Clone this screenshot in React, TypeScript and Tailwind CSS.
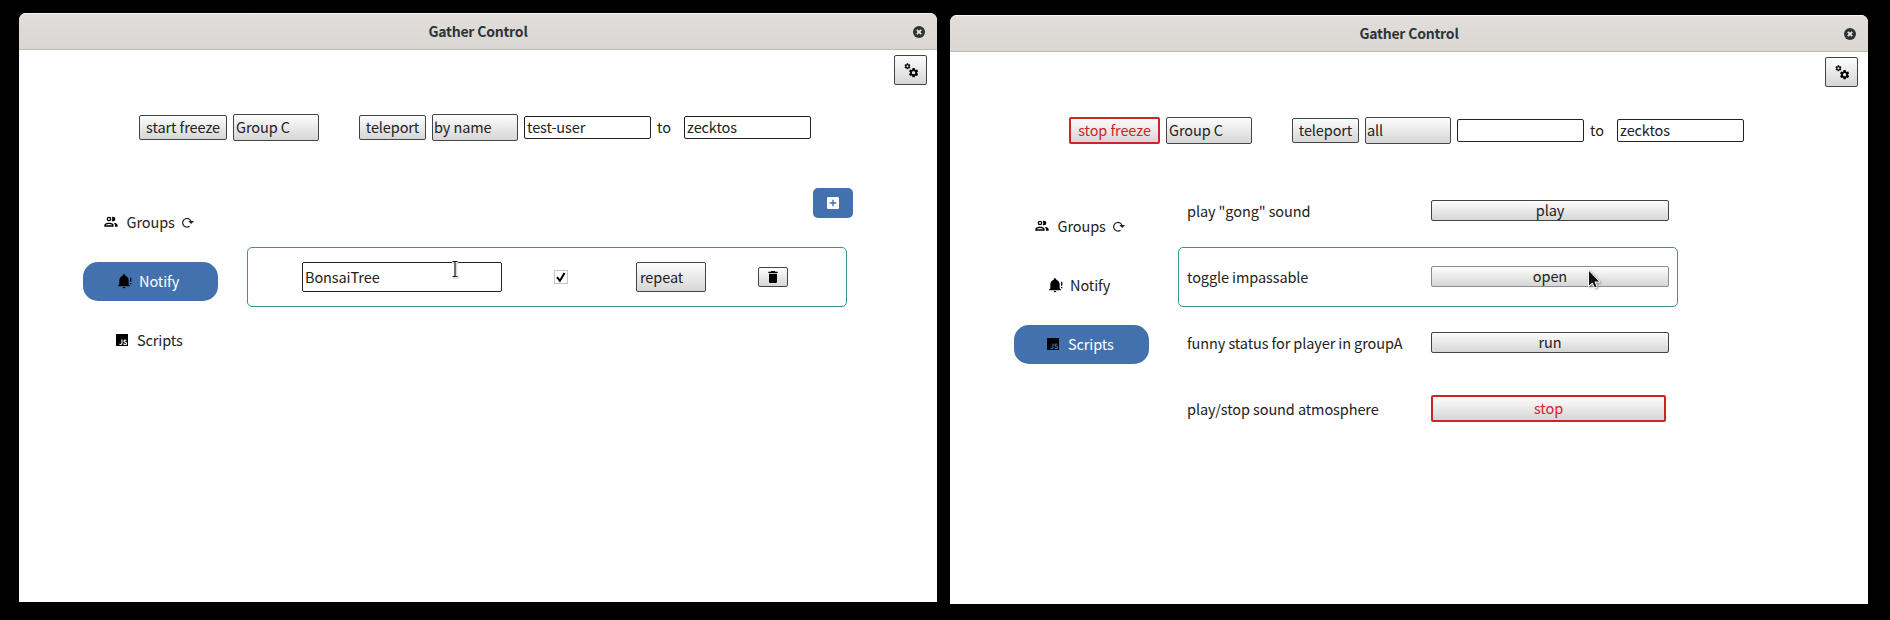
import type { ReactNode } from 'react';

const ICONS = {
  cogs: 'M15.9,18.45C17.25,18.45 18.35,17.35 18.35,16C18.35,14.65 17.25,13.55 15.9,13.55C14.54,13.55 13.45,14.65 13.45,16C13.45,17.35 14.54,18.45 15.9,18.45M21.1,16.68L22.58,17.84C22.71,17.95 22.75,18.13 22.66,18.29L21.26,20.71C21.17,20.86 21,20.92 20.83,20.86L19.09,20.16C18.73,20.44 18.33,20.67 17.91,20.85L17.64,22.7C17.62,22.87 17.47,23 17.3,23H14.5C14.32,23 14.18,22.87 14.15,22.7L13.89,20.85C13.46,20.67 13.07,20.44 12.71,20.16L10.96,20.86C10.81,20.92 10.62,20.86 10.54,20.71L9.14,18.29C9.05,18.13 9.09,17.95 9.22,17.84L10.7,16.68L10.65,16L10.7,15.31L9.22,14.16C9.09,14.05 9.05,13.86 9.14,13.71L10.54,11.29C10.62,11.13 10.81,11.07 10.96,11.13L12.71,11.84C13.07,11.56 13.46,11.32 13.89,11.15L14.15,9.29C14.18,9.13 14.32,9 14.5,9H17.3C17.47,9 17.62,9.13 17.64,9.29L17.91,11.15C18.33,11.32 18.73,11.56 19.09,11.84L20.83,11.13C21,11.07 21.17,11.13 21.26,11.29L22.66,13.71C22.75,13.86 22.71,14.05 22.58,14.16L21.1,15.31L21.15,16L21.1,16.68M6.69,8.07C7.56,8.07 8.26,7.37 8.26,6.5C8.26,5.63 7.56,4.92 6.69,4.92A1.58,1.58 0 0,0 5.11,6.5C5.11,7.37 5.82,8.07 6.69,8.07M10.03,6.94L11,7.68C11.07,7.74 11.09,7.87 11.03,7.97L10.13,9.53C10.08,9.63 9.96,9.67 9.86,9.63L8.74,9.18L8,9.62L7.81,10.81C7.79,10.92 7.7,11 7.59,11H5.79C5.67,11 5.58,10.92 5.56,10.81L5.4,9.62L4.64,9.18L3.5,9.63C3.41,9.67 3.3,9.63 3.24,9.53L2.34,7.97C2.28,7.87 2.31,7.74 2.39,7.68L3.34,6.94L3.31,6.5L3.34,6.06L2.39,5.32C2.31,5.26 2.28,5.13 2.34,5.03L3.24,3.47C3.3,3.37 3.41,3.33 3.5,3.38L4.63,3.82L5.4,3.38L5.56,2.19C5.58,2.08 5.67,2 5.79,2H7.59C7.7,2 7.79,2.08 7.81,2.19L8,3.38L8.74,3.82L9.86,3.38C9.96,3.33 10.08,3.37 10.13,3.47L11.03,5.03C11.09,5.13 11.07,5.26 11,5.32L10.03,6.06L10.06,6.5L10.03,6.94Z',
  groups:
    'M13.07 10.41A5 5 0 0 0 13.07 4.59A3.39 3.39 0 0 1 15 4A3.5 3.5 0 0 1 15 11A3.39 3.39 0 0 1 13.07 10.41M5.5 7.5A3.5 3.5 0 1 1 9 11A3.5 3.5 0 0 1 5.5 7.5M7.5 7.5A1.5 1.5 0 1 0 9 6A1.5 1.5 0 0 0 7.5 7.5M16 17V19H2V17S2 13 9 13 16 17 16 17M14 17C13.86 16.22 12.67 15 9 15S4.07 16.31 4 17M15.95 13A5.32 5.32 0 0 1 18 17V19H22V17S22 13.37 15.94 13Z',
  bell: 'M23 7V13H21V7M21 15H23V17H21M12 2A2 2 0 0 0 10 4A2 2 0 0 0 10 4.29C7.12 5.14 5 7.82 5 11V17L3 19V20H21V19L19 17V11C19 7.82 16.88 5.14 14 4.29A2 2 0 0 0 14 4A2 2 0 0 0 12 2M10 21A2 2 0 0 0 12 23A2 2 0 0 0 14 21Z',
  script:
    'M3,3H21V21H3V3M7.73,18.04C8.13,18.89 8.92,19.59 10.27,19.59C11.77,19.59 12.8,18.79 12.8,17.04V11.26H11.1V17C11.1,17.86 10.75,18.08 10.2,18.08C9.62,18.08 9.38,17.68 9.11,17.21L7.73,18.04M13.71,17.86C14.21,18.84 15.22,19.59 16.8,19.59C18.4,19.59 19.6,18.76 19.6,17.23C19.6,15.82 18.79,15.19 17.35,14.57L16.93,14.39C16.2,14.08 15.89,13.87 15.89,13.37C15.89,12.96 16.2,12.64 16.7,12.64C17.18,12.64 17.5,12.85 17.79,13.37L19.1,12.5C18.55,11.54 17.77,11.17 16.7,11.17C15.19,11.17 14.22,12.13 14.22,13.4C14.22,14.78 15.03,15.43 16.25,15.95L16.67,16.13C17.45,16.47 17.91,16.68 17.91,17.26C17.91,17.74 17.46,18.09 16.76,18.09C15.93,18.09 15.45,17.66 15.09,17.06L13.71,17.86Z',
  plus: 'M17,13H13V17H11V13H7V11H11V7H13V11H17M19,3H5C3.89,3 3,3.89 3,5V19A2,2 0 0,0 5,21H19A2,2 0 0,0 21,19V5C21,3.89 20.1,3 19,3Z',
  trash: 'M19,4H15.5L14.5,3H9.5L8.5,4H5V6H19M6,19A2,2 0 0,0 8,21H16A2,2 0 0,0 18,19V7H6V19Z',
};

function Icon({ name, className = '' }: { name: keyof typeof ICONS; className?: string }) {
  return (
    <svg viewBox="0 0 24 24" className={`size-4 shrink-0 fill-current ${className}`}>
      <path fillRule="evenodd" d={ICONS[name]} />
    </svg>
  );
}

const FACE = 'bg-linear-to-b from-[#fdfdfd] to-[#d6d6d6]';

function Button({ children, className = '', tone = 'normal' }: { children: ReactNode; className?: string; tone?: 'normal' | 'hover' | 'active' }) {
  const tones = {
    normal: 'border border-[#444]',
    hover: 'border border-[#8c8c8c]',
    active: 'border-2 border-[#cf2427] text-[#cf2427]',
  };
  return (
    <button className={`flex shrink-0 items-center justify-center rounded-[2px] ${FACE} ${tones[tone]} ${className}`}>
      {children}
    </button>
  );
}

function Select({ value, className = '' }: { value: string; className?: string }) {
  return (
    <div className={`flex shrink-0 items-center rounded-[2px] border border-[#444] ${FACE} ${className}`}>{value}</div>
  );
}

function Field({ value, className = '' }: { value: string; className?: string }) {
  return (
    <div className={`flex shrink-0 items-center rounded-[2px] border border-[#222] bg-white pl-[2px] ${className}`}>{value}</div>
  );
}

function Toolbar({ frozen, mode, user, className }: { frozen: boolean; mode: string; user: string; className: string }) {
  return (
    <div className={`flex h-[27px] items-center ${className}`}>
      {frozen ? (
        <Button tone="active" className="h-[27px] w-[91px] pb-[2px]">stop freeze</Button>
      ) : (
        <Button className="h-[25px] w-[88px] pb-[2px]">start freeze</Button>
      )}
      <Select value="Group C" className="ml-[6px] h-[27px] w-[86px] pb-[2px] pl-[2px]" />
      <Button className="ml-10 h-[25px] w-[67px] pb-[2px]">teleport</Button>
      <Select value={mode} className="ml-[6px] h-[27px] w-[86px] pb-[2px] pl-[1px]" />
      <Field value={user} className="ml-[6px] h-[23px] w-[127px] pb-[2px]" />
      <span className="ml-[6px] w-[27px] pb-[2px]">to</span>
      <Field value="zecktos" className="h-[23px] w-[127px] pb-[2px]" />
    </div>
  );
}

function NavItem({ icon, label, active, className }: { icon: keyof typeof ICONS; label: string; active: boolean; className: string }) {
  return (
    <div className={`flex h-[39px] w-[135px] items-center rounded-[15px] ${active ? 'bg-[#4271ae] text-white' : ''} ${className}`}>
      <Icon name={icon} className="mb-px text-black" />
      <span className="pb-[2px]">{label}</span>
      {icon === 'groups' && (
        <svg viewBox="0 0 12 11" className="mb-px h-[11px] w-3">
          <path d="M7.6 9.2A4.3 4.3 0 1 1 9.2 5" fill="none" stroke="#222" strokeWidth="1.2" />
          <path d="M6.2 3.9H12L9.2 7Z" fill="#222" />
        </svg>
      )}
    </div>
  );
}

function Sidebar({ active, className }: { active: string; className: string }) {
  return (
    <nav className={`flex w-[135px] shrink-0 flex-col gap-5 ${className}`}>
      <NavItem icon="groups" label="Groups" active={active === 'Groups'} className="gap-[7.5px] pl-5" />
      <NavItem icon="bell" label="Notify" active={active === 'Notify'} className="gap-[7px] pl-[33px]" />
      <NavItem icon="script" label="Scripts" active={active === 'Scripts'} className="gap-[7px] pl-[31px]" />
    </nav>
  );
}

function Window({ children, className }: { children: ReactNode; className: string }) {
  return (
    <section className={`flex h-[589px] w-[918px] shrink-0 flex-col overflow-hidden rounded-t-[7px] bg-white ${className}`}>
      <header className="grid h-[37px] shrink-0 grid-cols-[30px_1fr_30px] items-center border-b border-t border-t-[#f8f7f6] border-b-[#bfb8b1] bg-linear-to-b from-[#e1dedb] to-[#dad6d2]">
        <span />
        <h1 className="text-center text-[14px] font-bold tracking-[-0.22px] text-[#2e3436]">Gather Control</h1>
        <svg viewBox="0 0 12 12" className="ml-[6px] size-3">
          <circle cx="6" cy="6" r="6" fill="#2e3436" />
          <path d="M3.8 3.8L8.2 8.2M8.2 3.8L3.8 8.2" stroke="#e8e5e2" strokeWidth="1.8" />
        </svg>
      </header>
      <div className="flex justify-end pr-[10px] pt-[5px]">
        <Button className="h-[30px] w-[33px] text-black">
          <Icon name="cogs" />
        </Button>
      </div>
      {children}
    </section>
  );
}

function ScriptRow({ label, action, tone = 'normal', selected = false }: { label: string; action: string; tone?: 'normal' | 'hover' | 'active'; selected?: boolean }) {
  return (
    <div className={`flex h-[60px] w-[500px] items-center rounded-[5px] border pl-[8px] ${selected ? 'border-[#35959b]' : 'border-transparent'}`}>
      <span className="w-[244px] pb-px">{label}</span>
      <Button tone={tone} className={tone === 'active' ? 'mb-px h-[27px] w-[235px] pb-[2px]' : 'mb-px h-[21px] w-[238px] pb-[2px]'}>
        {action}
      </Button>
    </div>
  );
}

export default function App() {
  return (
    <main className="relative flex h-[620px] w-[1890px] items-start gap-[13px] overflow-hidden bg-black pl-[19px] pt-[13px] font-['Noto_Sans_CJK_SC','Noto_Sans',sans-serif] text-[14.5px] leading-[21px] tracking-[-0.1px] whitespace-nowrap text-[#222]">
      <Window className="">
        <Toolbar frozen={false} mode="by name" user="test-user" className="mt-[29px] pl-[120px]" />
        <div className="mt-[47px] flex items-start pl-16">
          <Sidebar active="Notify" className="mt-[15px]" />
          <div className="ml-[29px] flex w-[606px] flex-col">
            <button className="flex h-[30px] w-10 items-center justify-center self-end rounded-[5px] bg-[#4271ae] text-white">
              <Icon name="plus" />
            </button>
            <div className="mt-[29px] flex h-[60px] w-[600px] items-center rounded-[5px] border border-[#35959b] pl-[54px]">
              <Field value="BonsaiTree" className="h-[30px] w-[200px] pb-px" />
              <div className="ml-[52px] flex size-[14px] items-center justify-center border border-[#c6c6c6] bg-white">
                <svg viewBox="0 0 12 12" className="size-3">
                  <path d="M2 6.2L4.9 9.7L9.6 1.9" fill="none" stroke="#000" strokeWidth="2" />
                </svg>
              </div>
              <Select value="repeat" className="ml-[68px] h-[30px] w-[70px] pb-px pl-[3px]" />
              <Button className="ml-[52px] h-5 w-[30px] text-black">
                <Icon name="trash" />
              </Button>
            </div>
          </div>
        </div>
      </Window>

      <Window className="mt-[2px]">
        <Toolbar frozen mode="all" user="" className="mt-[30px] pl-[119px]" />
        <div className="mt-[37px] flex items-start pl-16">
          <Sidebar active="Scripts" className="mt-[26px]" />
          <div className="ml-[29px] flex flex-col gap-[6px]">
            <ScriptRow label={'play "gong" sound'} action="play" />
            <ScriptRow label="toggle impassable" action="open" tone="hover" selected />
            <ScriptRow label="funny status for player in groupA" action="run" />
            <ScriptRow label="play/stop sound atmosphere" action="stop" tone="active" />
          </div>
        </div>
      </Window>

      <svg viewBox="0 0 9 19" className="absolute left-[451px] top-[260px] h-[19px] w-[9px]">
        <path d="M1 1.5H7M4 1.5V16.5M1 16.5H7" fill="none" stroke="#999" strokeOpacity="0.5" strokeWidth="3" transform="translate(0.7 0.7)" />
        <path d="M1 1.5H7M4 1.5V16.5M1 16.5H7" fill="none" stroke="#fff" strokeWidth="2.6" />
        <path d="M1.5 1.5H6.5M4 1.5V16.5M1.5 16.5H6.5" fill="none" stroke="#111" strokeWidth="1.2" />
      </svg>
      <svg viewBox="0 0 14 20" className="absolute left-[1588px] top-[269px] h-5 w-[14px] drop-shadow-[1px_1px_1px_rgba(0,0,0,0.4)]">
        <path d="M0.5 1V17.5L4.3 14L6.6 19L9.2 17.8L7 13H12Z" fill="#111" stroke="#fff" strokeWidth="1" />
      </svg>
    </main>
  );
}
